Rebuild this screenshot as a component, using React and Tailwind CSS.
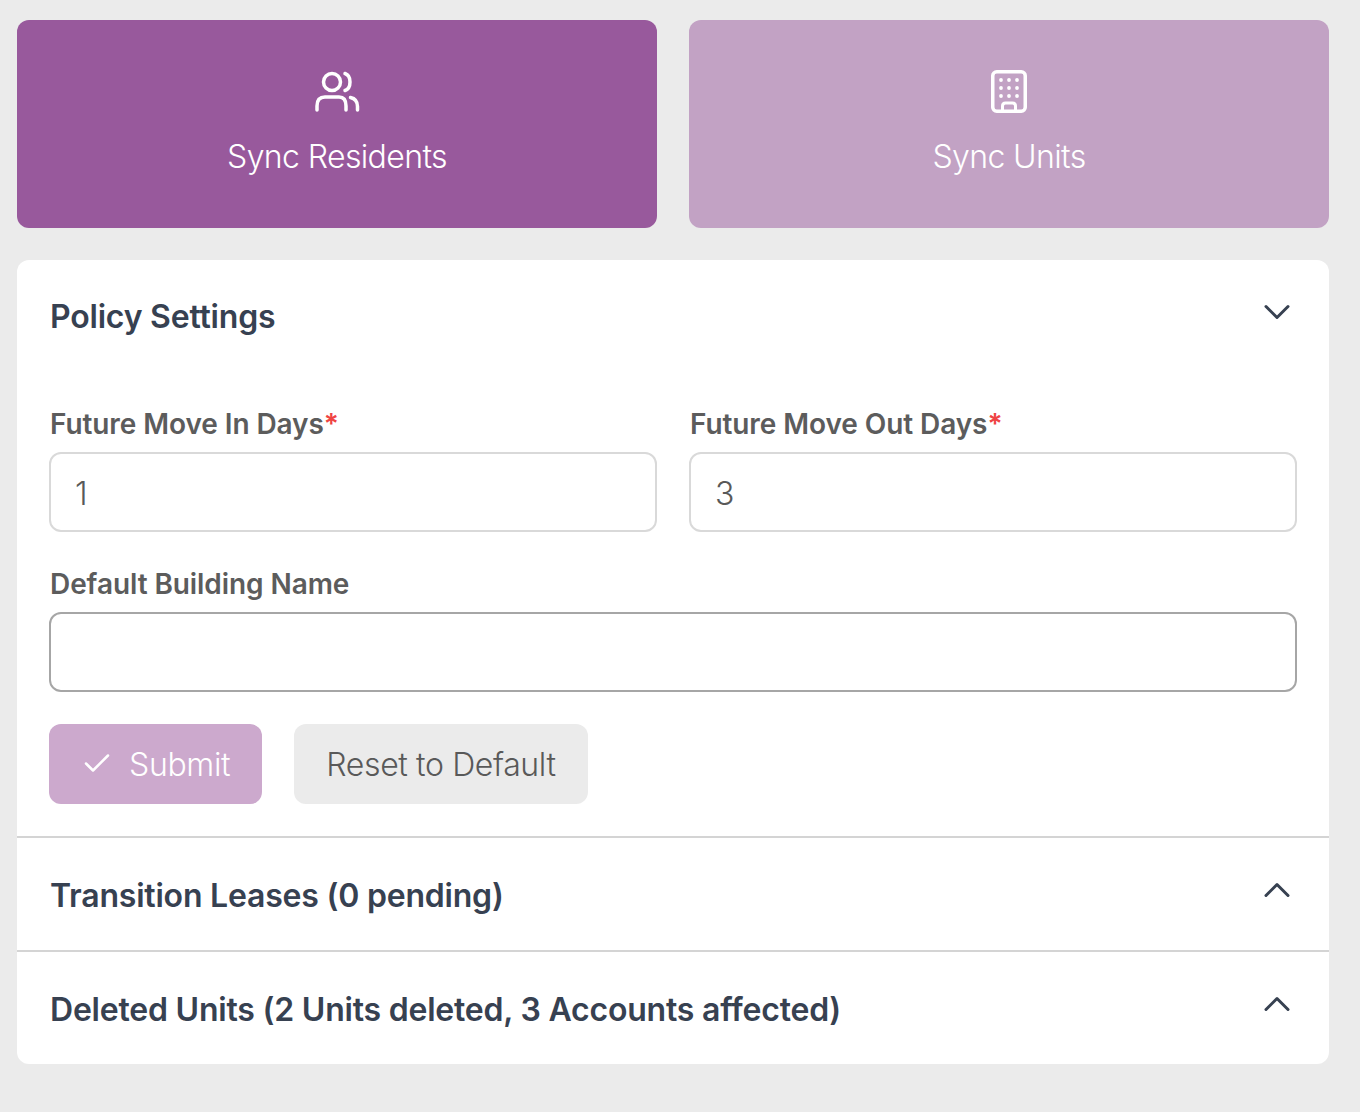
const FONT = "font-['Inter',sans-serif]";
const LABEL = "block text-[28px] leading-[32px] font-semibold tracking-[-0.08px] text-[#5c5c5c] pl-px";
const INP = "block w-full h-20 rounded-xl border-2 bg-white px-[24px] pt-[2px] text-[32px] font-light text-[#595959] focus:outline-none";

function UsersIcon() {
  return (
    <svg width="48" height="48" viewBox="0 0 48 48" fill="none" stroke="currentColor" strokeWidth="3.500" strokeLinecap="round" strokeLinejoin="round">
      <circle cx="19" cy="14" r="8.500" />
      <path d="M32 5.500c3 1 5 4.500 5 8.500s-2 7.500-5 8.500" />
      <path d="M4 42v-4c0-6 3-9 8-9h14c5 0 7 3 7 9v4" />
      <path d="M37.500 29.500c4.500 1 7 4 7 9v3.500" />
    </svg>
  );
}

function BuildingIcon() {
  return (
    <svg width="48" height="48" viewBox="0 0 48 48" fill="none" stroke="currentColor" strokeWidth="3.500" strokeLinecap="round" strokeLinejoin="round">
      <rect x="7.750" y="3.750" width="32.500" height="39.500" rx="4" />
      <path d="M17.500 43v-5c0-2 1-3 3-3h7c2 0 3 1 3 3v5" strokeWidth="3" />
      <g fill="currentColor" stroke="none">
        <circle cx="16" cy="12" r="1.900" />
        <circle cx="24" cy="12" r="1.900" />
        <circle cx="32" cy="12" r="1.900" />
        <circle cx="16" cy="20" r="1.900" />
        <circle cx="24" cy="20" r="1.900" />
        <circle cx="32" cy="20" r="1.900" />
        <circle cx="16" cy="28" r="1.900" />
        <circle cx="24" cy="28" r="1.900" />
        <circle cx="32" cy="28" r="1.900" />
      </g>
    </svg>
  );
}

function Chevron({ up }) {
  return (
    <svg width="32" height="32" viewBox="0 0 32 32" fill="none" stroke="#374151" strokeWidth="3" strokeLinecap="round" strokeLinejoin="round">
      <path d={up ? "M5 20.500l11-11 11 11" : "M5 11.500l11 11 11-11"} />
    </svg>
  );
}

function SyncCard({ label, icon, className }) {
  return (
    <button className={`h-52 rounded-xl flex flex-col items-center pt-12 text-white ${className}`}>
      {icon}
      <span className="mt-[16px] text-[32px] leading-[50px] font-light tracking-[-0.62px]">{label}</span>
    </button>
  );
}

function SectionRow({ title }) {
  return (
    <div className="h-[114px] border-t-2 border-[#d4d4d4] flex items-center justify-between pl-8 pr-9 pt-[4px]">
      <h2 className="text-[32px] font-semibold tracking-[-0.21px] text-[#374151] pl-px">{title}</h2>
      <span className="-mt-[10px]"><Chevron up /></span>
    </div>
  );
}

export default function App() {
  return (
    <div className={`min-h-[1112px] bg-[#ebebeb] pt-5 pl-[17px] pr-[31px] ${FONT}`}>
      <div className="grid grid-cols-2 gap-8">
        <SyncCard label="Sync Residents" icon={<UsersIcon />} className="bg-[#98599c]" />
        <SyncCard label="Sync Units" icon={<BuildingIcon />} className="bg-[#c2a2c4]" />
      </div>

      <div className="mt-8 bg-white rounded-xl overflow-hidden">
        {/* Policy settings */}
        <div className="px-8 pb-8">
          <div className="h-[114px] flex items-start justify-between pt-[35px] pr-1">
            <h2 className="text-[32px] leading-[42px] pt-px pl-px font-semibold tracking-[-0.21px] text-[#374151]">Policy Settings</h2>
            <Chevron />
          </div>
          <div className="mt-[34px] grid grid-cols-2 gap-8">
            <div>
              <label className={`${LABEL} mb-[12px]`}>Future Move In Days<span className="text-[#ef4444]">*</span></label>
              <input defaultValue="1" className={`${INP} border-[#d9d9d9]`} />
            </div>
            <div>
              <label className={`${LABEL} mb-[12px]`}>Future Move Out Days<span className="text-[#ef4444]">*</span></label>
              <input defaultValue="3" className={`${INP} border-[#d9d9d9]`} />
            </div>
          </div>
          <div className="mt-9">
            <label className={`${LABEL} mb-[12px]`}>Default Building Name</label>
            <input className={`${INP} border-[#a6a6a6]`} />
          </div>
          <div className="mt-8 flex gap-8">
            <button className="h-20 w-[213px] rounded-xl bg-[#cca9cd] text-white flex items-center pl-8 gap-4 text-[32px] font-light tracking-[-0.33px]">
              <svg width="32" height="32" viewBox="0 0 32 32" fill="none" stroke="currentColor" strokeWidth="2.500" strokeLinecap="round" strokeLinejoin="round">
                <path d="M5 15.500l7 7L27 7.500" />
              </svg>
              <span className="pt-[2px]">Submit</span>
            </button>
            <button className="h-20 w-[294px] rounded-xl bg-[#ebebeb] text-[#595959] pt-[2px] text-[32px] font-light tracking-[-0.38px]">
              Reset to Default
            </button>
          </div>
        </div>

        <SectionRow title="Transition Leases (0 pending)" />
        <SectionRow title="Deleted Units (2 Units deleted, 3 Accounts affected)" />
      </div>
    </div>
  );
}
